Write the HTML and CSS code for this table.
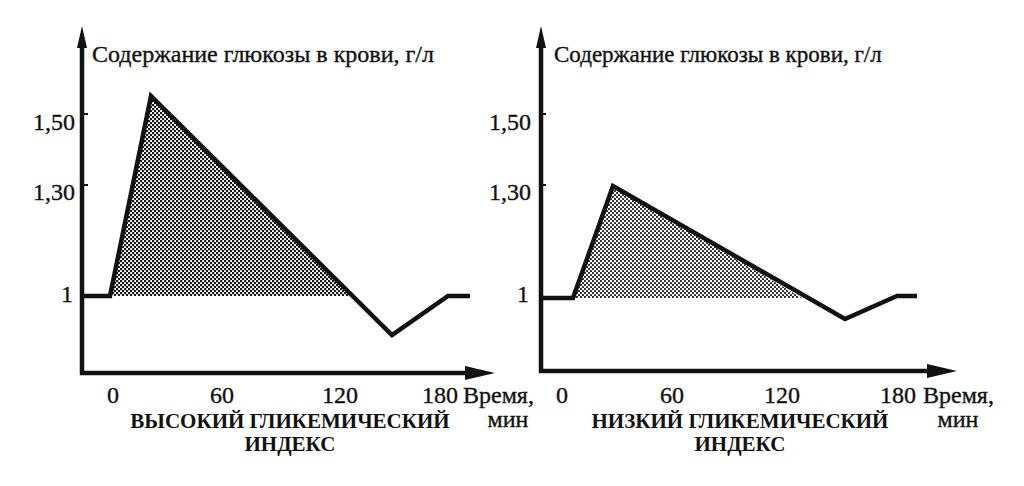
FILE: index.html
```html
<!DOCTYPE html>
<html lang="ru">
<head>
<meta charset="utf-8">
<title>Гликемический индекс</title>
<link rel="stylesheet" href="styles.css">
</head>
<body>
<div class="figure">
  <section class="panel panel-high">
    <svg class="chart" width="480" height="410" viewBox="0 0 480 410">
      <defs>
        <pattern id="dots-dark" width="4" height="4" patternUnits="userSpaceOnUse">
          <rect x="0" y="0" width="2.2" height="2.2" fill="#1a1a1a"/>
          <rect x="2" y="2" width="2.2" height="2.2" fill="#1a1a1a"/>
        </pattern>
      </defs>
      <polygon class="area area-dark" points="110,296 151,96 353,296"/>
      <line class="axis" x1="82" y1="44" x2="82" y2="375"/>
      <polygon class="arrow" points="82,26 77,48 87,48"/>
      <line class="axis" x1="80" y1="373" x2="468" y2="373"/>
      <polygon class="arrow" points="495,373 465,366 465,380"/>
      <line class="tick" x1="84" y1="114" x2="88" y2="114"/>
      <line class="tick" x1="84" y1="185" x2="88" y2="185"/>
      <polyline class="curve" points="82,296 110,296 151,96 392,335 448,296 470,296"/>
      <text class="title title-high" x="92" y="62">Содержание глюкозы в крови, г/л</text>
      <text class="ylabel" x="75" y="130">1,50</text>
      <text class="ylabel" x="75" y="200">1,30</text>
      <text class="ylabel" x="73" y="302">1</text>
      <text class="xlabel" x="113" y="403">0</text>
      <text class="xlabel" x="222" y="403">60</text>
      <text class="xlabel" x="340" y="403">120</text>
      <text class="xlabel" x="440" y="403">180</text>
      <text class="unit" x="463" y="403">Время,</text>
      <text class="unit unit-min" x="508" y="427">мин</text>
    </svg>
    <p class="caption">ВЫСОКИЙ ГЛИКЕМИЧЕСКИЙ<br>ИНДЕКС</p>
  </section>
  <section class="panel panel-low">
    <svg class="chart" width="544" height="410" viewBox="0 0 544 410">
      <defs>
        <pattern id="dots-light" width="4" height="4" patternUnits="userSpaceOnUse">
          <circle cx="1" cy="1" r="1.05" fill="#1a1a1a"/>
          <circle cx="3" cy="3" r="1.05" fill="#1a1a1a"/>
        </pattern>
      </defs>
      <polygon class="area area-light" points="93,298 133,186 322,298"/>
      <line class="axis" x1="61" y1="44" x2="61" y2="373"/>
      <polygon class="arrow" points="61,26 56,48 66,48"/>
      <line class="axis" x1="59" y1="371" x2="450" y2="371"/>
      <polygon class="arrow" points="477,371 447,364 447,378"/>
      <line class="tick" x1="63" y1="114" x2="66" y2="114"/>
      <line class="tick" x1="63" y1="185" x2="66" y2="185"/>
      <polyline class="curve" points="61,298 93,298 133,186 365,319 417,296 437,296"/>
      <text class="title title-low" x="74" y="62">Содержание глюкозы в крови, г/л</text>
      <text class="ylabel" x="51" y="130">1,50</text>
      <text class="ylabel" x="51" y="200">1,30</text>
      <text class="ylabel" x="49" y="302">1</text>
      <text class="xlabel" x="82" y="403">0</text>
      <text class="xlabel" x="192" y="403">60</text>
      <text class="xlabel" x="302" y="403">120</text>
      <text class="xlabel" x="418" y="403">180</text>
      <text class="unit" x="443" y="403">Время,</text>
      <text class="unit unit-min" x="478" y="427">мин</text>
    </svg>
    <p class="caption">НИЗКИЙ ГЛИКЕМИЧЕСКИЙ<br>ИНДЕКС</p>
  </section>
</div>
</body>
</html>
```

FILE: styles.css
```css
html, body {
  margin: 0;
  padding: 0;
  background: #ffffff;
}

body {
  width: 1024px;
  height: 486px;
  overflow: hidden;
  font-family: "Liberation Serif", "Times New Roman", serif;
  color: #111;
}

.figure {
  display: flex;
  flex-direction: row;
  align-items: flex-start;
}

.panel {
  display: flex;
  flex-direction: column;
}

.panel-high {
  width: 480px;
}

.panel-low {
  width: 544px;
}

.chart {
  display: block;
  overflow: visible;
}

.chart text {
  font-family: "Liberation Serif", "Times New Roman", serif;
  fill: #111;
  stroke: #111;
  stroke-width: 0.35;
}

.axis {
  stroke: #111;
  stroke-width: 4.5;
}

.tick {
  stroke: #111;
  stroke-width: 2;
}

.arrow {
  fill: #111;
}

.curve {
  fill: none;
  stroke: #111;
  stroke-width: 4.5;
  stroke-linejoin: miter;
}

.area-dark {
  fill: url(#dots-dark);
}

.area-light {
  fill: url(#dots-light);
}

.title-high {
  font-size: 24px;
}

.title-low {
  font-size: 23px;
}

.ylabel {
  font-size: 24px;
  text-anchor: end;
}

.xlabel {
  font-size: 24px;
  text-anchor: middle;
}

.unit {
  font-size: 24px;
}

.unit-min {
  text-anchor: middle;
}

.caption {
  margin: 0;
  font-family: "Liberation Serif", "Times New Roman", serif;
  font-weight: bold;
  font-size: 21px;
  line-height: 23px;
  text-align: center;
  color: #111;
}

.panel-high .caption {
  padding-left: 100px;
}

.panel-low .caption {
  padding-right: 24px;
}
```
